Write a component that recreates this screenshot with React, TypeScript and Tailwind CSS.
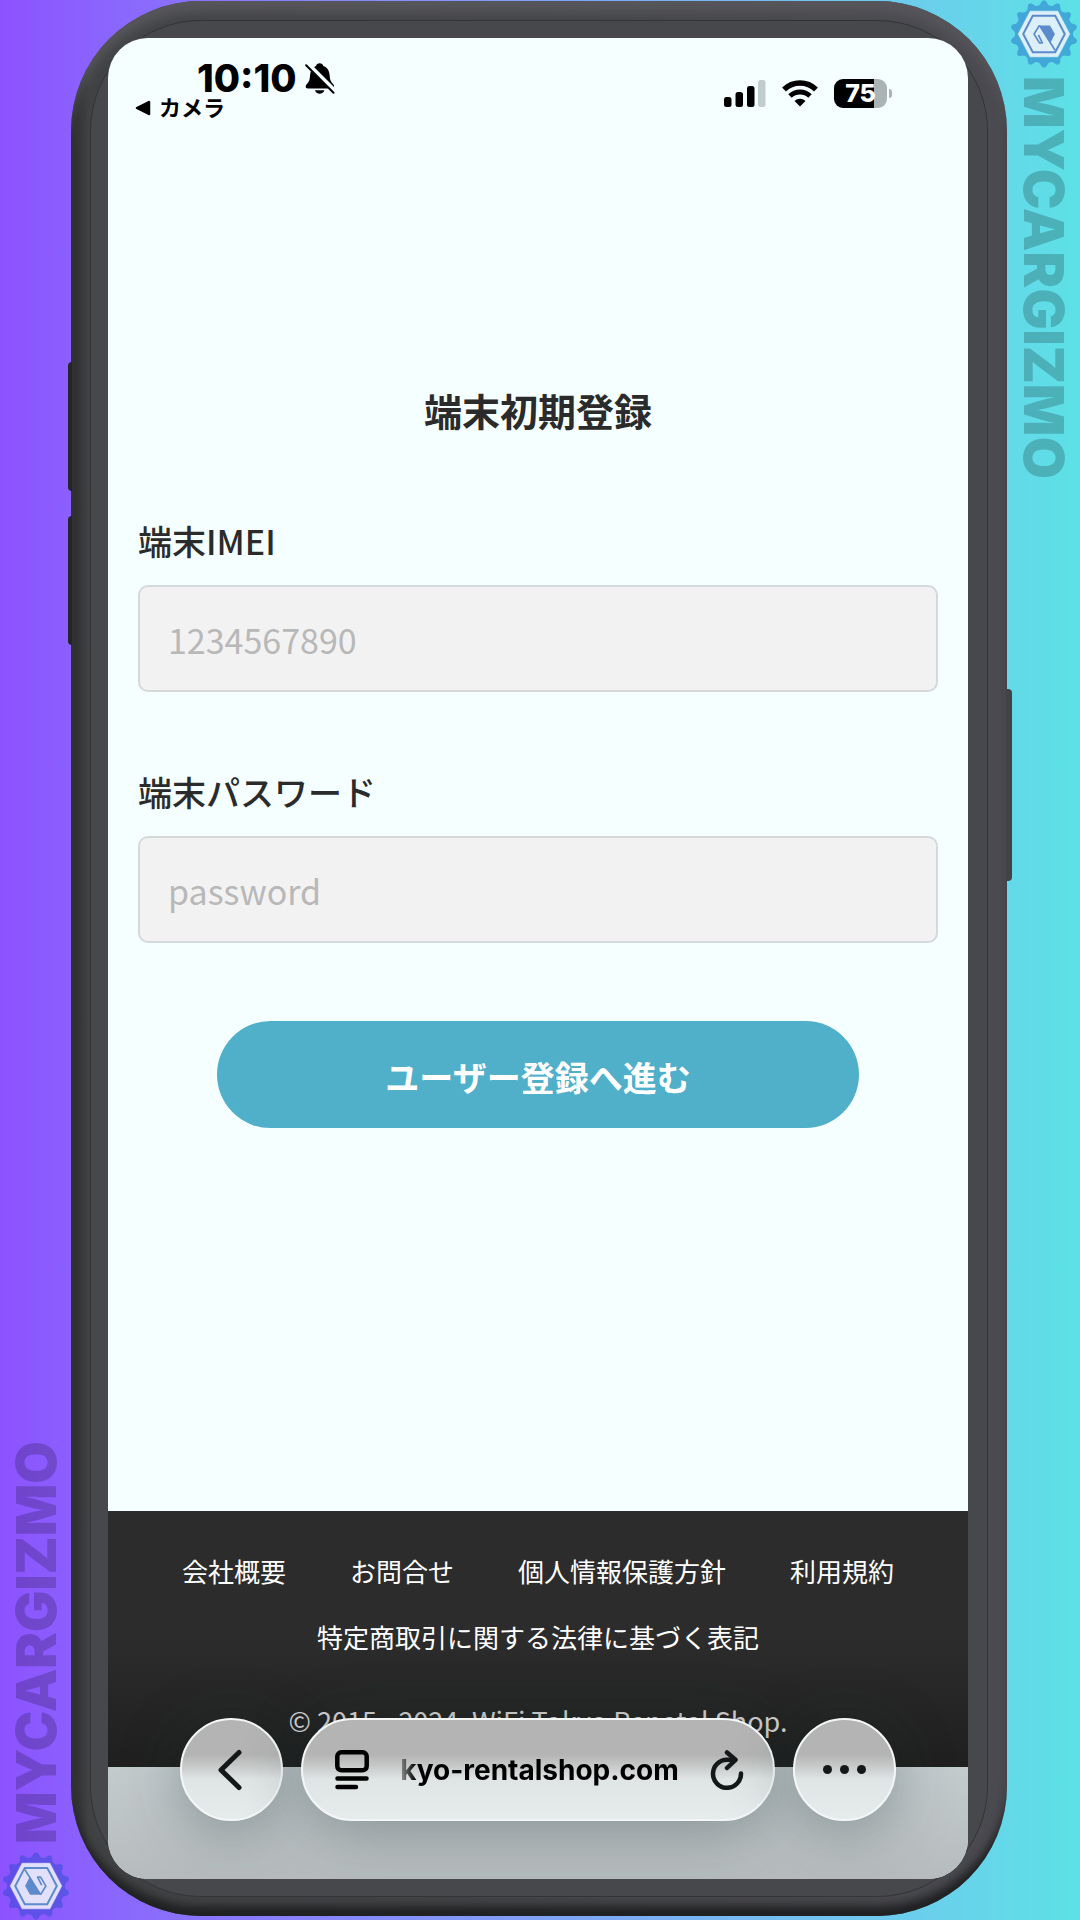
import React from 'react';

const GEAR_TEETH = Array.from({ length: 14 }, (_, i) => (i * 360) / 14);

const FOOTER_LINKS = ['会社概要', 'お問合せ', '個人情報保護方針', '利用規約', '特定商取引に関する法律に基づく表記'];

const BrandLogo: React.FC = () => (
    <svg viewBox="-103 -103 206 206" className="w-[68px] h-[68px] shrink-0" aria-hidden="true">
        <g fill="#0844bc" opacity="0.34">
            <circle r="88" />
            {GEAR_TEETH.map(angle => (
                <path key={angle} d="M-19 -84 Q-11 -88 -8 -97 Q0 -108 8 -97 Q11 -88 19 -84 Z" transform={`rotate(${angle})`} />
            ))}
        </g>
        <path d="M-42 -69 H42 L78 0 L42 69 H-42 L-78 0 Z" fill="#fff" fillOpacity="0.82" stroke="#fff" strokeOpacity="0.3" strokeWidth="4" strokeLinejoin="round" />
        <path d="M-34 -55 H34 L63 0 L34 55 H-34 L-63 0 Z" fill="none" stroke="#5b8bcd" strokeWidth="6" />
        <path d="M-15 -26 H18 L33 0 L20 26 Z" fill="#5b8bcd" />
        <path d="M-14 -26 L-30 0 L-14 27 H-5 L-17 3 M-14 -26 L34 50" fill="none" stroke="#5b8bcd" strokeWidth="5" strokeLinejoin="round" />
    </svg>
);

const BrandMark: React.FC = () => (
    <div className="flex flex-col items-center gap-2">
        <BrandLogo />
        <span className="font-[Inter,sans-serif] font-black text-[55px] leading-[68px] text-black/20 [writing-mode:vertical-rl]">MYCARGIZMO</span>
    </div>
);

const MutedBellIcon: React.FC = () => (
    <svg viewBox="0 0 90 94" className="w-[30px] h-[31px]" aria-hidden="true">
        <path d="M44 1 C50 1 54 4 55 9 C67 13 73 23 74 36 C75 50 77 56 84 63 C90 69 89 77 80 77 H8 C0 77 0 69 6 63 C13 56 14 50 15 36 C16 23 22 13 33 9 C34 4 38 1 44 1 Z" />
        <path d="M30 83 H58 C56 97 32 97 30 83 Z" />
        <path d="M6 2 L90 86" stroke="#f5ffff" strokeWidth="15" />
        <path d="M3 7 L86 90" stroke="#000" strokeWidth="6" strokeLinecap="round" />
    </svg>
);

const SignalIcon: React.FC = () => (
    <svg viewBox="0 0 42 27" className="w-[42px] h-[27px]" aria-hidden="true">
        <rect x="0" y="17" width="7.500" height="10" rx="2.500" />
        <rect x="11.500" y="12" width="7.500" height="15" rx="2.500" />
        <rect x="23" y="6" width="7.500" height="21" rx="2.500" />
        <rect x="34" y="0" width="7.500" height="27" rx="2.500" fill="#c3cccc" />
    </svg>
);

const WifiIcon: React.FC = () => (
    <svg viewBox="0 0 36 27" className="w-9 h-[27px]" fill="none" stroke="#000" aria-hidden="true">
        <path d="M2 9.500 A23 23 0 0 1 34 9.500" strokeWidth="5.500" />
        <path d="M8 16 A14.500 14.500 0 0 1 28 16" strokeWidth="5" />
        <path d="M18 26.500 L12.500 21 A8 8 0 0 1 23.500 21 Z" fill="#000" stroke="none" />
    </svg>
);

const Battery: React.FC = () => (
    <div className="flex items-center gap-[2px]">
        <div className="flex items-center justify-center w-[53px] h-[29px] rounded-[9px] bg-[linear-gradient(to_right,#000_75%,#abb4b4_75%)] text-white font-extrabold text-[25px] leading-[29px]">75</div>
        <div className="w-[3px] h-[9px] rounded-r-full bg-[#abb4b4]" />
    </div>
);

const StatusBar: React.FC = () => (
    <header className="flex justify-between items-start h-24 pl-[27px] pr-[76px] pt-[22px] font-[Inter,'Noto_Sans_CJK_JP',sans-serif] text-black">
        <div>
            <div className="flex items-center gap-2 pl-[62px] h-9">
                <span className="font-extrabold text-[38px] leading-9">10:10</span>
                <MutedBellIcon />
            </div>
            <button type="button" className="flex items-center gap-2 h-6 text-[22px] leading-6 font-bold">
                <svg viewBox="0 0 16 16" className="w-4 h-4" aria-hidden="true">
                    <path d="M2 8 L14 2 V14 Z" stroke="#000" strokeWidth="2.500" strokeLinejoin="round" />
                </svg>
                カメラ
            </button>
        </div>
        <div className="flex items-center gap-4 pt-[19px]">
            <SignalIcon />
            <WifiIcon />
            <Battery />
        </div>
    </header>
);

interface FieldProps {
    id: string;
    label: string;
    type: string;
    placeholder: string;
}

const Field: React.FC<FieldProps> = ({ id, label, type, placeholder }) => (
    <div className="flex flex-col gap-5">
        <label htmlFor={id} className="text-[34px] leading-[48px] font-medium">{label}</label>
        <input
            id={id}
            type={type}
            placeholder={placeholder}
            className="w-full h-[107px] px-7 pt-px rounded-[10px] border-2 border-[#d6d9da] bg-[#f3f2f3] text-[34px] placeholder:text-[#b8b8b8] outline-none"
        />
    </div>
);

const SiteFooter: React.FC = () => (
    <footer className="mt-auto h-64 pt-10 bg-linear-to-b from-[#2c2c2c] from-50% to-[#1f1f1f] text-white text-[26px] leading-10">
        <nav className="flex flex-wrap justify-center gap-x-16 gap-y-[26px]">
            {FOOTER_LINKS.map(link => (
                <a key={link} href="#">{link}</a>
            ))}
        </nav>
        <p className="mt-11 text-center text-[27px] text-[#d4d4d4]">© 2015 - 2024. WiFi Tokyo Renatal Shop.</p>
    </footer>
);

const BrowserBar: React.FC = () => (
    <div className="absolute inset-x-0 bottom-[58px] flex justify-center gap-[18px] px-[72px] font-[Inter,sans-serif] text-black">
        <button type="button" aria-label="戻る" className="flex items-center justify-center w-[103px] h-[103px] shrink-0 rounded-full border-2 border-[#f4f6f6] bg-linear-to-b from-[#b4b4b4] from-35% via-[#dfe4e4] via-60% to-[#e6ecec] shadow-[0_10px_60px_rgba(30,45,45,0.35)]">
            <svg viewBox="0 0 24 42" className="w-6 h-[42px] mr-1" fill="none" stroke="#151819" strokeWidth="5" strokeLinecap="round" strokeLinejoin="round" aria-hidden="true">
                <path d="M21 3.500 L3 21 L21 38.500" />
            </svg>
        </button>
        <div className="flex items-center justify-between w-[474px] h-[103px] pl-[32px] pr-[29px] rounded-full border-2 border-[#f4f6f6] bg-linear-to-b from-[#b4b4b4] from-35% via-[#dfe4e4] via-60% to-[#e6ecec] shadow-[0_10px_60px_rgba(30,45,45,0.35)]">
            <button type="button" aria-label="ページメニュー">
                <svg viewBox="0 0 34 40" className="w-[34px] h-10" fill="none" stroke="#000" strokeWidth="4.500" strokeLinecap="round" aria-hidden="true">
                    <rect x="2.300" y="2.300" width="29.400" height="18" rx="4" />
                    <path d="M2.500 28.500 H31.500 M2.500 37 H21" />
                </svg>
            </button>
            <button type="button" className="text-[28px] leading-9 font-bold [mask-image:linear-gradient(to_right,rgba(0,0,0,0.3),#000_16px)]">kyo-rentalshop.com</button>
            <button type="button" aria-label="再読み込み">
                <svg viewBox="0 0 34 40" className="w-[34px] h-10" fill="none" stroke="#151819" strokeWidth="4.500" strokeLinecap="round" strokeLinejoin="round" aria-hidden="true">
                    <path d="M24 9.800 H17 A14 14 0 1 0 31 23.500" />
                    <path d="M17 2.500 L25.500 9.800 L17 18" />
                </svg>
            </button>
        </div>
        <button type="button" aria-label="その他" className="flex items-center justify-center gap-2 w-[103px] h-[103px] shrink-0 rounded-full border-2 border-[#f4f6f6] bg-linear-to-b from-[#b4b4b4] from-35% via-[#dfe4e4] via-60% to-[#e6ecec] shadow-[0_10px_60px_rgba(30,45,45,0.35)]">
            <span className="w-[9px] h-[9px] rounded-full bg-[#151819]" />
            <span className="w-[9px] h-[9px] rounded-full bg-[#151819]" />
            <span className="w-[9px] h-[9px] rounded-full bg-[#151819]" />
        </button>
    </div>
);

const PhoneScreen: React.FC = () => (
    <div className="relative flex-1 flex flex-col overflow-hidden rounded-[40px] bg-[#f5ffff] text-[#2b2b2b]">
        <StatusBar />
        <main className="px-[30px] pt-[248px]">
            <h1 className="text-center text-[38px] leading-[56px] font-bold">端末初期登録</h1>
            <form className="flex flex-col gap-[76px] mt-[79px]">
                <Field id="imei" label="端末IMEI" type="text" placeholder="1234567890" />
                <Field id="device-password" label="端末パスワード" type="password" placeholder="password" />
                <button type="button" className="w-[642px] max-w-full h-[107px] pt-1 mt-0.5 mx-auto rounded-full bg-[#50afc9] text-white text-[34px] font-bold">
                    ユーザー登録へ進む
                </button>
            </form>
        </main>
        <SiteFooter />
        <div className="h-28 bg-linear-to-b from-[#c3cbcd] to-[#b6bcbe]" />
        <BrowserBar />
    </div>
);

const App: React.FC = () => (
    <div className="flex min-h-screen overflow-hidden bg-linear-to-r from-[#8c52ff] to-[#5ce1e6] font-['Noto_Sans_CJK_JP',sans-serif]" lang="ja">
        <aside className="flex flex-col justify-end items-center w-[71px] shrink-0">
            <div className="rotate-180">
                <BrandMark />
            </div>
        </aside>
        <div className="flex-1 flex flex-col pt-px pb-1">
            <div className="relative flex-1 flex flex-col p-[19px] rounded-[130px] bg-[linear-gradient(to_right,#292b2c,#404244_18px,#454649_60%,#4a4a50)] shadow-[inset_0_16px_12px_-4px_#56565b,inset_0_-14px_10px_-4px_#1f2021]">
                {/* Side buttons */}
                <div className="absolute -left-[3px] top-[361px] w-1 h-[129px] rounded-l-sm bg-[#242527]" />
                <div className="absolute -left-[3px] top-[515px] w-1 h-[129px] rounded-l-sm bg-[#242527]" />
                <div className="absolute -right-[5px] top-[688px] w-[6px] h-[192px] rounded-r-sm bg-[#424347]" />
                <div className="flex-1 flex flex-col p-[17px] pr-[19px] rounded-[111px] border border-[#333436] bg-[#47484b]">
                    <PhoneScreen />
                </div>
            </div>
        </div>
        <aside className="flex flex-col items-center w-[73px] shrink-0">
            <BrandMark />
        </aside>
    </div>
);

export default App;
